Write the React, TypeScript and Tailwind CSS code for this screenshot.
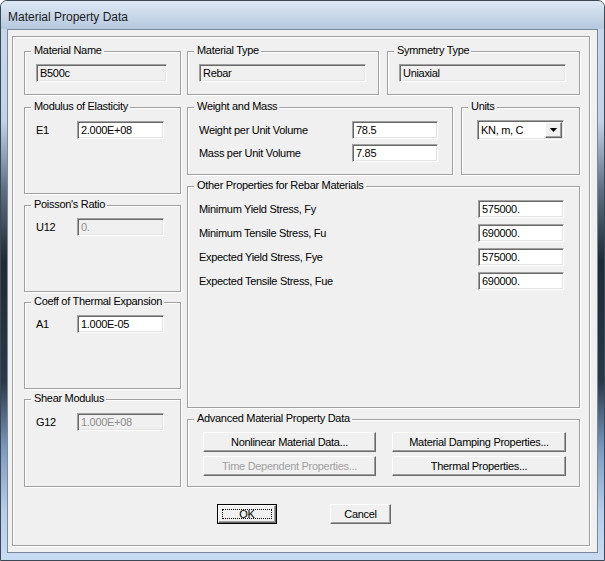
import React from 'react';

const etched = 'border border-[#a0a0a0] shadow-[inset_1px_1px_0_#fff,1px_1px_0_#fff]';
const sunken =
    'border border-t-[#a0a0a0] border-l-[#a0a0a0] border-r-white border-b-white shadow-[inset_1px_1px_0_#696969,inset_-1px_-1px_0_#e3e3e3]';
const raised =
    'border border-t-white border-l-white border-r-[#696969] border-b-[#696969] shadow-[inset_-1px_-1px_0_#a0a0a0] bg-[#f0f0f0]';

const Group = ({ title, className, children }: { title: string; className: string; children?: React.ReactNode }) => (
    <div className={`relative ${etched} ${className}`}>
        <span className="absolute -top-[8px] left-[6px] bg-[#f0f0f0] pl-[3px] pr-[2px] leading-[13px] whitespace-nowrap">{title}</span>
        {children}
    </div>
);

const Field = ({ value, className, kind = 'edit' }: { value: string; className: string; kind?: 'edit' | 'read' | 'off' }) => {
    const look = kind === 'edit' ? 'bg-white text-black' : kind === 'read' ? 'bg-[#f0f0f0] text-black' : 'bg-[#f0f0f0] text-[#8d8d8d]';
    return <div className={`h-[18px] flex items-center pl-[3px] whitespace-nowrap ${sunken} ${look} ${className}`}>{value}</div>;
};

const Btn = ({ label, className, off }: { label: string; className: string; off?: boolean }) => (
    <div className={`h-[20px] flex items-center justify-center ${raised} ${off ? 'text-[#a0a0a0]' : 'text-black'} ${className}`}>{label}</div>
);

const Row = ({ label, value, kind, labelW }: { label: string; value: string; kind?: 'edit' | 'read' | 'off'; labelW: string }) => (
    <div className="flex items-center">
        <span className={labelW}>{label}</span>
        <Field value={value} kind={kind} className="w-[87px]" />
    </div>
);

export default function App() {
    const rebar = [
        ['Minimum Yield Stress, Fy', '575000.'],
        ['Minimum Tensile Stress, Fu', '690000.'],
        ['Expected Yield Stress, Fye', '575000.'],
        ['Expected Tensile Stress, Fue', '690000.'],
    ];

    return (
        <div className="w-[605px] h-[561px] flex flex-col border border-[#3c4855] rounded-t-[7px] overflow-hidden bg-[linear-gradient(180deg,#c9d8ea_0px,#c2d3e8_120px,#5d6d80_190px,#1f2a35_260px,#2a3848_380px,#7e9cc2_450px,#b7cdea_510px,#c9dcf2_561px)] font-['Liberation_Sans',Arial,sans-serif] text-[11px] tracking-[-0.3px] text-black">
            {/* title bar */}
            <div className="h-[28px] shrink-0 flex items-center pl-[7px] pt-[4px] bg-[linear-gradient(180deg,#dde8f4,#c8d7e9_55%,#b6c8de)] text-[12px] tracking-normal text-[#1b1b1b]">
                Material Property Data
            </div>

            {/* client */}
            <div className="ml-[6px] w-[591px] h-[524px] shrink-0 border border-[#7a8798] bg-[#f0f0f0] pl-[4px] pt-[6px]">
                <div className={`w-[578px] h-[510px] ${etched} pl-[11px] pt-[14px]`}>
                    <div className="flex gap-[6px]">
                        {/* left column */}
                        <div className="w-[157px] flex flex-col">
                            <Group title="Material Name" className="h-[44px] pl-[11px] pt-[12px]">
                                <Field value="B500c" kind="read" className="w-[131px]" />
                            </Group>
                            <Group title="Modulus of Elasticity" className="mt-[12px] h-[87px] pl-[11px] pt-[13px]">
                                <Row label="E1" value="2.000E+08" labelW="w-[41px]" />
                            </Group>
                            <Group title="Poisson's Ratio" className="mt-[11px] h-[87px] pl-[11px] pt-[12px]">
                                <Row label="U12" value="0." kind="off" labelW="w-[41px]" />
                            </Group>
                            <Group title="Coeff of Thermal Expansion" className="mt-[10px] h-[87px] pl-[11px] pt-[12px]">
                                <Row label="A1" value="1.000E-05" labelW="w-[41px]" />
                            </Group>
                            <Group title="Shear Modulus" className="mt-[10px] h-[88px] pl-[11px] pt-[13px]">
                                <Row label="G12" value="1.000E+08" kind="off" labelW="w-[41px]" />
                            </Group>
                        </div>

                        {/* right column */}
                        <div className="w-[393px] flex flex-col">
                            <div className="flex gap-[8px]">
                                <Group title="Material Type" className="w-[192px] h-[44px] pl-[11px] pt-[12px]">
                                    <Field value="Rebar" kind="read" className="w-[167px]" />
                                </Group>
                                <Group title="Symmetry Type" className="w-[193px] h-[44px] pl-[11px] pt-[12px]">
                                    <Field value="Uniaxial" kind="read" className="w-[167px]" />
                                </Group>
                            </div>

                            <div className="mt-[12px] flex gap-[8px]">
                                <Group title="Weight and Mass" className="w-[266px] h-[68px] pl-[11px] pt-[13px] flex flex-col gap-[5px]">
                                    <div className="flex items-center">
                                        <span className="w-[153px]">Weight per Unit Volume</span>
                                        <Field value="78.5" className="w-[86px]" />
                                    </div>
                                    <div className="flex items-center">
                                        <span className="w-[153px]">Mass per Unit Volume</span>
                                        <Field value="7.85" className="w-[86px]" />
                                    </div>
                                </Group>
                                <Group title="Units" className="w-[119px] h-[68px] pl-[15px] pt-[12px]">
                                    <div className={`w-[87px] h-[20px] flex bg-white ${sunken}`}>
                                        <span className="flex-1 flex items-center pl-[3px]">KN, m, C</span>
                                        <div className={`w-[17px] h-[16px] mt-[1px] mr-[1px] flex items-center justify-center ${raised}`}>
                                            <svg width="7" height="4" viewBox="0 0 7 4">
                                                <path d="M0 0h7L3.5 4z" fill="#000" />
                                            </svg>
                                        </div>
                                    </div>
                                </Group>
                            </div>

                            <Group title="Other Properties for Rebar Materials" className="mt-[11px] h-[222px] pl-[11px] pr-[15px] pt-[13px] flex flex-col gap-[6px]">
                                {rebar.map(([label, val]) => (
                                    <div key={label} className="flex items-center justify-between">
                                        <span>{label}</span>
                                        <Field value={val} className="w-[86px]" />
                                    </div>
                                ))}
                            </Group>

                            <Group title="Advanced Material Property Data" className="mt-[11px] h-[68px] pl-[15px] pt-[12px]">
                                <div className="grid grid-cols-[173px_174px] gap-x-[16px] gap-y-[4px]">
                                    <Btn label="Nonlinear Material Data..." className="" />
                                    <Btn label="Material Damping Properties..." className="" />
                                    <Btn label="Time Dependent Properties..." className="" off />
                                    <Btn label="Thermal Properties..." className="" />
                                </div>
                            </Group>
                        </div>
                    </div>

                    {/* OK / Cancel */}
                    <div className="mt-[17px] flex">
                        <div className="ml-[193px] w-[60px] h-[20px] border border-black">
                            <div className={`relative w-full h-full flex items-center justify-center ${raised}`}>
                                <span className="absolute inset-[3px] border border-dotted border-black" />
                                OK
                            </div>
                        </div>
                        <Btn label="Cancel" className="ml-[53px] w-[61px]" />
                    </div>
                </div>
            </div>
        </div>
    );
}
